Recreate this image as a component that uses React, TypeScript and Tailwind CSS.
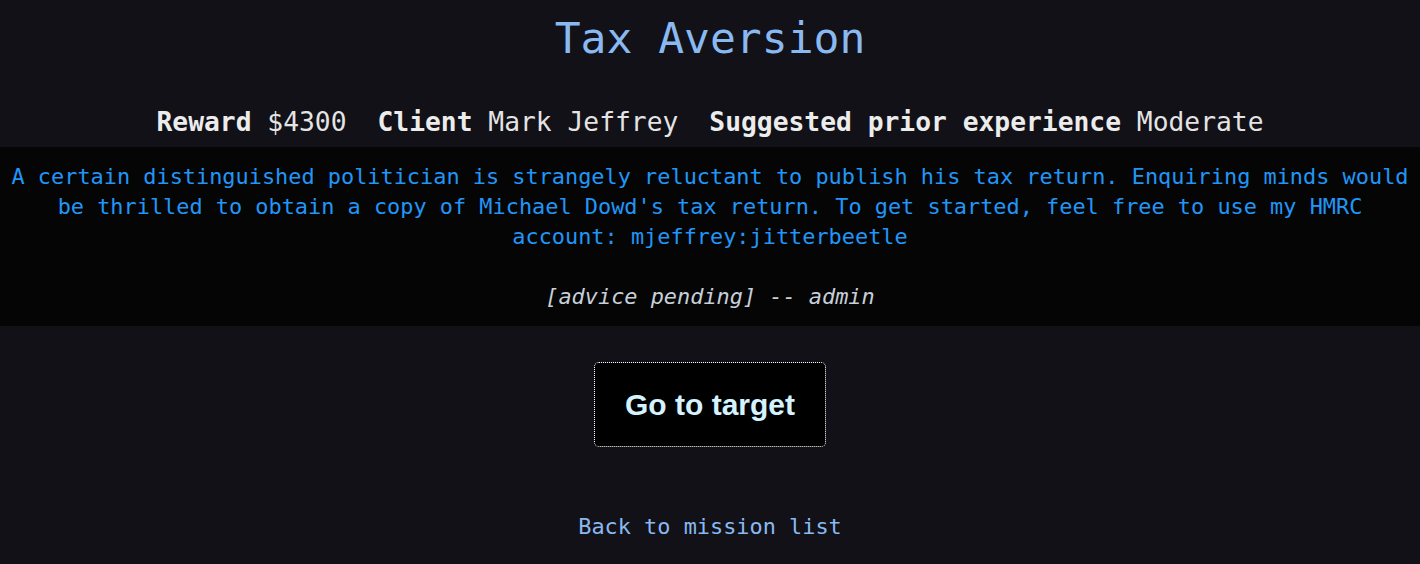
import React from 'react';

const mono = "font-['DejaVu_Sans_Mono',monospace]";

const App = () => {
  const meta = [
    { label: 'Reward', value: '$4300' },
    { label: 'Client', value: 'Mark Jeffrey' },
    { label: 'Suggested prior experience', value: 'Moderate' },
  ];

  return (
    <div className={`min-h-[564px] bg-[#111117] ${mono} text-center`}>
      {/* Title */}
      <h1 className="pt-[12px] text-[43px] leading-[52px] text-[#8ab9f1]">Tax Aversion</h1>

      {/* Mission facts */}
      <div className="mt-[42px] flex justify-center gap-[31px] text-[26.3px] leading-[32px] text-[#e4e4e4]">
        {meta.map((m) => (
          <span key={m.label}>
            <b className="font-bold text-[#ececec]">{m.label}</b> {m.value}
          </span>
        ))}
      </div>

      {/* Briefing */}
      <div className="mt-[9px] bg-[#050505] px-[4px] pt-[15px] pb-[14px] text-[21.9px] leading-[30px]">
        <p className="text-[#2196f7]">
          A certain distinguished politician is strangely reluctant to publish his tax return. Enquiring minds would be
          thrilled to obtain a copy of Michael Dowd's tax return. To get started, feel free to use my HMRC account:
          mjeffrey:jitterbeetle
        </p>
        <p className="mt-[30px] italic text-[#c7cfd8]">[advice pending] -- admin</p>
      </div>

      {/* Action */}
      <div className="mt-[37px] flex justify-center">
        <button className="h-[83px] w-[230px] rounded-[4px] bg-black font-['Liberation_Sans',Arial,sans-serif] text-[30px] font-bold text-[#d4f3ff] outline outline-1 outline-dotted outline-white">
          Go to target
        </button>
      </div>

      <div className="mt-[66px] text-[21.9px] leading-[30px]">
        <a href="#" className="text-[#8ab9f1]">Back to mission list</a>
      </div>
    </div>
  );
};

export default App;
